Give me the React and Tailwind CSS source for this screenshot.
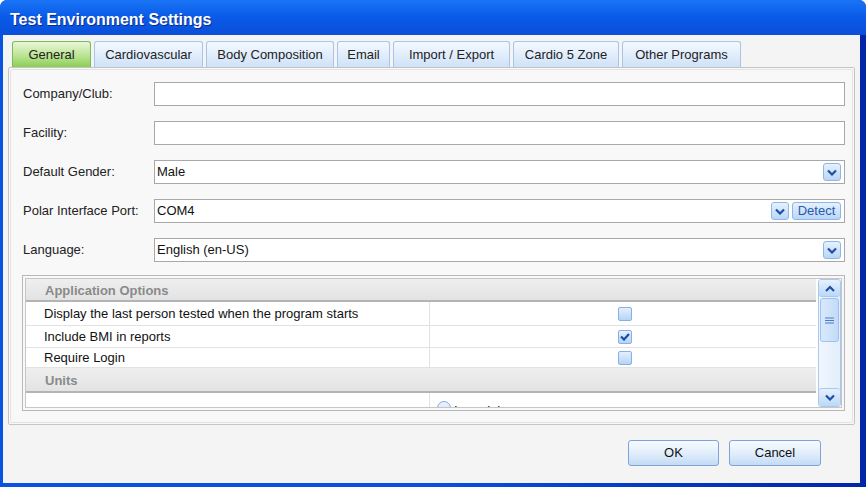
import React from "react";

const font = { fontFamily: '"Liberation Sans", Arial, sans-serif' };

function Chevron({ up = false }) {
  return (
    <svg width="10" height="7" viewBox="0 0 10 7">
      <path
        d={up ? "M1 6 L5 2 L9 6" : "M1 1.5 L5 5.5 L9 1.5"}
        fill="none"
        stroke="#1d4fa8"
        strokeWidth="2.2"
      />
    </svg>
  );
}

function DropBtn() {
  return (
    <div className="w-[18px] h-[18px] rounded-[3px] border border-[#8fb6e8] bg-gradient-to-b from-[#e6f1fd] to-[#b9d6f7] flex items-center justify-center">
      <Chevron />
    </div>
  );
}

function Tab({ label, active, w }) {
  return (
    <div
      className={
        "h-[26px] flex items-center justify-center rounded-t-[3px] border border-b-0 text-[13px] text-[#222] " +
        (active
          ? "border-[#7fba5a] bg-gradient-to-b from-[#e8f7d6] via-[#bfe59a] to-[#8ccf52]"
          : "border-[#a9c4e6] bg-gradient-to-b from-[#f4f9ff] to-[#cfe2f8]")
      }
      style={{ width: w }}
    >
      {label}
    </div>
  );
}

function Field({ label, children }) {
  return (
    <div className="flex items-center h-[24px]">
      <div className="w-[131px] text-[13px] text-[#222]">{label}</div>
      <div className="flex-1 h-[24px] bg-white border border-[#a8a8a8] flex items-center pl-[2px] pr-[3px] text-[13px] text-[#111]">
        {children}
      </div>
    </div>
  );
}

function Checkbox({ checked }) {
  return (
    <div className="w-[14px] h-[14px] rounded-[2px] border border-[#86b0e6] bg-gradient-to-b from-[#e4f0fd] to-[#b6d4f6] flex items-center justify-center">
      {checked && (
        <svg width="10" height="8" viewBox="0 0 10 8">
          <path d="M1 3.5 L4 6.5 L9 1" fill="none" stroke="#1a4ca6" strokeWidth="2.2" />
        </svg>
      )}
    </div>
  );
}

function OptRow({ label, checked, h }) {
  return (
    <div className="flex border-b border-[#e2e2e2] bg-white" style={{ height: h }}>
      <div className="w-[404px] border-r border-[#e2e2e2] flex items-center pl-[18px] text-[13px] text-[#111]">
        {label}
      </div>
      <div className="flex-1 flex items-center pl-[188px]">
        <Checkbox checked={checked} />
      </div>
    </div>
  );
}

function Header({ label, h }) {
  return (
    <div
      className="flex items-center pl-[19px] pt-[2px] bg-gradient-to-b from-[#efefef] to-[#e3e3e3] border-b-2 border-[#b4b4b4] text-[13px] font-bold text-[#8a8a8a]"
      style={{ height: h }}
    >
      {label}
    </div>
  );
}

function WinButton({ label, w }) {
  return (
    <div
      className="h-[26px] rounded-[3px] border border-[#7ea3d8] bg-gradient-to-b from-[#f7fbff] via-[#e2eefb] to-[#c3dbf5] flex items-center justify-center text-[13px] text-[#111]"
      style={{ width: w }}
    >
      {label}
    </div>
  );
}

export default function App() {
  return (
    <div
      className="w-[866px] h-[487px] flex flex-col rounded-t-[7px] overflow-hidden bg-gradient-to-r from-[#0a52e0] via-[#0a4fe0] to-[#0325a8]"
      style={font}
    >
      <div className="h-[35px] shrink-0 flex items-center pl-[10px] pt-[4px] bg-gradient-to-b from-[#1a74f5] via-[#0a5ae8] to-[#0a4fd8]">
        <span className="text-white font-bold text-[16px] [text-shadow:1px_1px_0_#0a2a8a]">
          Test Environment Settings
        </span>
      </div>
      <div className="flex-1 ml-[3px] mr-[6px] mb-[4px] bg-[#f4f4f4] flex flex-col">
        <div className="flex gap-[3px] pl-[9px] pt-[6px]">
          <Tab label="General" active w={79} />
          <Tab label="Cardiovascular" w={109} />
          <Tab label="Body Composition" w={128} />
          <Tab label="Email" w={53} />
          <Tab label="Import / Export" w={117} />
          <Tab label="Cardio 5 Zone" w={106} />
          <Tab label="Other Programs" w={119} />
        </div>
        <div className="mx-[5px] h-[358px] border border-[#c4c4c4] rounded-[2px] bg-[#f8f8f8] p-[1px]">
          <div className="h-full border border-[#e4e4e4] rounded-[2px] pl-[12px] pr-[7px] pt-[12px] flex flex-col gap-[15px]">
            <Field label="Company/Club:" />
            <Field label="Facility:" />
            <Field label="Default Gender:">
              <span className="flex-1">Male</span>
              <DropBtn />
            </Field>
            <Field label="Polar Interface Port:">
              <span className="flex-1">COM4</span>
              <DropBtn />
              <div className="ml-[3px] h-[18px] w-[49px] rounded-[3px] border border-[#8fb6e8] bg-gradient-to-b from-[#e6f1fd] to-[#b9d6f7] flex items-center justify-center text-[13px] text-[#2a5aa8]">
                Detect
              </div>
            </Field>
            <Field label="Language:">
              <span className="flex-1">English (en-US)</span>
              <DropBtn />
            </Field>
            <div className="-ml-[1px] -mt-[2px] h-[136px] border border-[#b8b8b8] p-[2px]">
              <div className="h-full border border-[#c6c6c6] flex bg-white">
                <div className="flex-1 flex flex-col overflow-hidden">
                  <Header label="Application Options" h={23} />
                  <OptRow label="Display the last person tested when the program starts" h={24} />
                  <OptRow label="Include BMI in reports" checked h={22} />
                  <OptRow label="Require Login" h={20} />
                  <Header label="Units" h={25} />
                  <div className="flex flex-1 bg-white overflow-hidden">
                    <div className="w-[404px] border-r border-[#e2e2e2]" />
                    <div className="flex-1 flex items-start pl-[7px] pt-[8px] gap-[3px] text-[13px] text-[#111]">
                      <div className="w-[14px] h-[14px] rounded-full border border-[#7fa8e0] bg-gradient-to-b from-[#eef5fe] to-[#c6dcf6] shrink-0" />
                      <span>Imperial</span>
                    </div>
                  </div>
                </div>
                <div className="w-[23px] ml-[2px] flex flex-col rounded-[3px] border border-[#a9c8ef] bg-gradient-to-r from-[#f0f6fe] to-[#e2eefc]">
                  <div className="h-[17px] flex items-center justify-center rounded-[3px] border-b border-[#a9c8ef] bg-gradient-to-b from-[#e6f1fd] to-[#bcd8f7]">
                    <Chevron up />
                  </div>
                  <div className="h-[44px] mx-[1px] mt-[1px] rounded-[3px] border border-[#9ec2ee] bg-gradient-to-r from-[#d9e9fc] to-[#c3dbf7] flex items-center justify-center">
                    <svg width="9" height="7" viewBox="0 0 9 7">
                      <path d="M0 1 H9 M0 3.5 H9 M0 6 H9" stroke="#4a7cc4" strokeWidth="1" />
                    </svg>
                  </div>
                  <div className="flex-1" />
                  <div className="h-[18px] flex items-center justify-center rounded-[3px] border-t border-[#a9c8ef] bg-gradient-to-b from-[#e6f1fd] to-[#bcd8f7]">
                    <Chevron />
                  </div>
                </div>
              </div>
            </div>
          </div>
        </div>
        <div className="flex justify-end gap-[10px] pr-[39px] pt-[15px]">
          <WinButton label="OK" w={91} />
          <WinButton label="Cancel" w={92} />
        </div>
      </div>
    </div>
  );
}
